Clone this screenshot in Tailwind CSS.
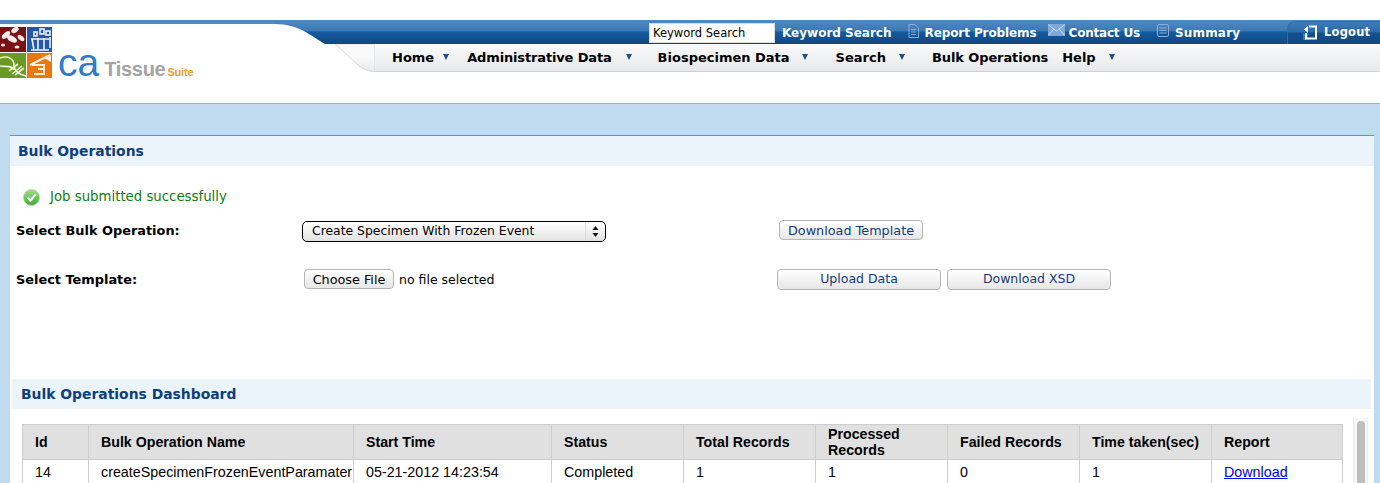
<!DOCTYPE html>
<html lang="en">

<head>
    <meta charset="UTF-8">
    <title>caTissue Suite - Bulk Operations</title>
    <script src="https://cdn.jsdelivr.net/npm/@tailwindcss/browser@4"></script>
</head>

<body class="h-[483px] overflow-hidden bg-[#c0daf0] font-['DejaVu_Sans',sans-serif]">
    <!-- header -->
    <header class="flex h-[104px] border-b border-[#8db5de] bg-white pt-[20px]">
        <div class="w-[275px] shrink-0">
            <div class="h-[4px] bg-[#5089c0]"></div>
            <div class="flex items-end pt-[3px]">
                <svg class="h-[51px] w-[52px] shrink-0 blur-[0.4px]" viewBox="0 0 52 51">
                    <rect x="0" y="0" width="26" height="25" fill="#7c0f14" />
                    <g fill="#f7ecea">
                        <ellipse cx="6" cy="8" rx="5" ry="2.500" transform="rotate(-40 6 8)" />
                        <ellipse cx="15" cy="3" rx="4" ry="2.500" transform="rotate(-30 15 3)" />
                        <ellipse cx="12" cy="12" rx="5.500" ry="3" transform="rotate(30 12 12)" />
                        <ellipse cx="21" cy="11" rx="4" ry="2.200" transform="rotate(40 21 11)" />
                        <ellipse cx="3" cy="18" rx="2" ry="1.500" />
                        <ellipse cx="17" cy="20" rx="2.500" ry="1.500" />
                    </g>
                    <rect x="27" y="0" width="25" height="25" fill="#2458a8" />
                    <g fill="none" stroke="#eef2fa" stroke-width="1.600">
                        <path d="M32 12l2 11M38 11v12M44 11v12M50 10v11" />
                        <path d="M31 12h20M31 23h18" />
                        <rect x="40" y="2" width="4" height="5" />
                        <rect x="46" y="4" width="4" height="4" />
                        <rect x="34" y="5" width="3" height="4" />
                    </g>
                    <rect x="0" y="26" width="26" height="25" fill="#6b9a22" />
                    <g fill="none" stroke="#eef3dc" stroke-width="1.600">
                        <path d="M0 31c8-3 14 1 14 7s6 10 12 11" />
                        <path d="M0 39c6 1 12-1 14 4" />
                        <path d="M12 47l10-8M9 44l9-7M15 48l9-7" />
                    </g>
                    <rect x="27" y="26" width="25" height="25" fill="#e9790f" />
                    <g fill="none" stroke="#fbeee0" stroke-width="2">
                        <path d="M30 38l12-6 8-4" />
                        <path d="M32 38h12v9h-10M38 42h6" />
                    </g>
                    <path d="M44 31l7-3v7z" fill="#fbeee0" />
                </svg>
                <div class="mb-[-4px] ml-[6px] flex items-baseline leading-none">
                    <span class="font-['Liberation_Sans',sans-serif] text-[39px] text-[#2f7bcb]">ca</span>
                    <span class="ml-[5px] font-['Liberation_Sans',sans-serif] text-[20px] font-bold tracking-[-0.3px] text-[#a3a3a3]">Tissue</span>
                    <span class="ml-[2px] font-['Liberation_Sans',sans-serif] text-[11px] font-bold tracking-[-0.2px] text-[#e2a12f]">Suite</span>
                </div>
            </div>
        </div>

        <svg class="h-[52px] w-[100px] shrink-0" viewBox="0 0 100 52">
            <defs>
                <linearGradient id="barFill" x1="0" y1="0" x2="0" y2="1">
                    <stop offset="0" stop-color="#5089c0" />
                    <stop offset="0.45" stop-color="#3b79b6" />
                    <stop offset="0.5" stop-color="#145a9f" />
                    <stop offset="1" stop-color="#12477f" />
                </linearGradient>
                <linearGradient id="navFill" x1="0" y1="0" x2="0" y2="1">
                    <stop offset="0.46" stop-color="#fafafa" />
                    <stop offset="1" stop-color="#e7e8ea" />
                </linearGradient>
            </defs>
            <path d="M60 24H100V51.500H97C84 50 76 37 60 24Z" fill="url(#navFill)" stroke="#d4d4d4" stroke-width="0.8" />
            <path d="M0 0H100V24H50C36 16 24 4 0 4Z" fill="url(#barFill)" />
        </svg>

        <div class="min-w-0 flex-1">
            <div class="flex h-[24px] bg-[linear-gradient(#5089c0_0%,#3b79b6_45%,#145a9f_50%,#12477f_100%)] text-[12px] font-bold text-white">
                <input value="Keyword Search" class="ml-[274px] mt-[3px] h-[20px] w-[126px] border border-[#dcdcdc] bg-white pl-[3px] text-[11.500px] font-normal text-black">
                <a class="ml-[7px] mt-[4px]">Keyword Search</a>
                <svg class="ml-[16px] mt-[4px] h-[14px] w-[11px]" viewBox="0 0 11 14" fill="none" stroke="#88aedb">
                    <path d="M1 .5H7L10.500 4V13.500H1Z" />
                    <path d="M3 5.500H8M3 8H8M3 10.500H8" />
                </svg>
                <a class="ml-[6px] mt-[4px] tracking-[-0.1px]">Report Problems</a>
                <svg class="ml-[11px] mt-[4px] h-[12px] w-[17px]" viewBox="0 0 17 12">
                    <rect width="17" height="12" fill="#7ea8da" />
                    <path d="M0 .5L8.500 7L17 .5M0 11.500L6 5M17 11.500L11 5" fill="none" stroke="#c6daf2" />
                </svg>
                <a class="ml-[4px] mt-[4px] tracking-[-0.2px]">Contact Us</a>
                <svg class="ml-[17px] mt-[4px] h-[13px] w-[12px]" viewBox="0 0 12 13" fill="none" stroke="#88aedb">
                    <rect x=".5" y=".5" width="11" height="12" rx="1.500" />
                    <path d="M2.500 4H9.500M2.500 6.500H9.500M2.500 9H9.500" />
                </svg>
                <a class="ml-[6px] mt-[4px] tracking-[0.2px]">Summary</a>
                <div class="ml-auto mt-[1px] flex h-[23px] w-[93px] rounded-tl-[8px] border-l border-t border-[#2f6dae] bg-[linear-gradient(#3e7ab7_0%,#2b6bab_45%,#13528f_50%,#11467e_100%)] pl-[15px]">
                    <svg class="mt-[3px] h-[15px] w-[15px]" viewBox="0 0 15 15">
                        <path d="M0 8h5v7H0z" fill="#2f7bdb" />
                        <path d="M6 1.500H13V13.500H3V8" fill="none" stroke="#fff" stroke-width="2" />
                        <path d="M1 4.500L5 1V8Z" fill="#fff" />
                    </svg>
                    <a class="ml-[6px] mt-[2px] text-[11.500px] tracking-[0.2px]">Logout</a>
                </div>
            </div>

            <nav class="flex h-[28px] items-center border-b-[1.500px] border-[#d0d0d0] bg-[linear-gradient(#fafafa,#e8e9eb)] pl-[17px] text-[13px] font-bold text-black">
                <a>Home</a>
                <span class="ml-[9px] mt-[-2px] border-x-[3.500px] border-t-[6px] border-x-transparent border-t-[#1d4f8c]"></span>
                <a class="ml-[18px] tracking-[-0.15px]">Administrative Data</a>
                <span class="ml-[14px] mt-[-2px] border-x-[3.500px] border-t-[6px] border-x-transparent border-t-[#1d4f8c]"></span>
                <a class="ml-[26px]">Biospecimen Data</a>
                <span class="ml-[12px] mt-[-2px] border-x-[3.500px] border-t-[6px] border-x-transparent border-t-[#1d4f8c]"></span>
                <a class="ml-[28px]">Search</a>
                <span class="ml-[13px] mt-[-2px] border-x-[3.500px] border-t-[6px] border-x-transparent border-t-[#1d4f8c]"></span>
                <a class="ml-[27px] tracking-[-0.1px]">Bulk Operations</a>
                <a class="ml-[14px]">Help</a>
                <span class="ml-[13px] mt-[-2px] border-x-[3.500px] border-t-[6px] border-x-transparent border-t-[#1d4f8c]"></span>
            </nav>
        </div>
    </header>

    <!-- main panel -->
    <main class="ml-[10px] mr-[6px] mt-[31px] border-t border-[#cf7440] bg-white">
        <h2 class="flex h-[30px] items-center bg-[#ebf3fb] pl-[8px] text-[13.900px] font-bold text-[#0f3e7d]">Bulk Operations</h2>

        <div class="flex h-[44px] items-center pb-[2px] pl-[13px] pt-[20px] text-[13.300px] text-[#0f7d0f]">
            <svg class="h-[17px] w-[17px]" viewBox="0 0 17 17">
                <defs>
                    <linearGradient id="okFill" x1="0" y1="0" x2="0" y2="1">
                        <stop offset="0" stop-color="#a5e08a" />
                        <stop offset="1" stop-color="#35ad2a" />
                    </linearGradient>
                </defs>
                <circle cx="8.500" cy="8.500" r="8" fill="url(#okFill)" stroke="#c4c9c4" />
                <path d="M4.500 8.500L7.500 11.500L12.500 5.500" fill="none" stroke="#fff" stroke-width="2" />
            </svg>
            <span class="ml-[10px]">Job submitted successfully</span>
        </div>

        <div class="grid grid-cols-[286px_475px_1fr] pl-[6px] text-[12.900px] text-black">
            <label class="flex h-[49px] items-center pb-[7px] font-bold">Select Bulk Operation:</label>
            <div class="flex h-[49px] items-center pb-[7px]">
                <div class="relative h-[21px] w-[304px]">
                    <select class="h-full w-full appearance-none rounded-[5px] border border-black bg-[linear-gradient(#ffffff,#e2e2e2)] pl-[9px] text-[12.400px]">
                        <option>Create Specimen With Frozen Event</option>
                    </select>
                    <span class="absolute bottom-[1px] right-[1px] top-[1px] flex w-[20px] items-center justify-center border-l border-[#dddddd]">
                        <svg class="h-[11px] w-[7px]" viewBox="0 0 7 11" fill="#111">
                            <path d="M3.500 0L6.500 4H.5ZM3.500 11L.5 7H6.500Z" />
                        </svg>
                    </span>
                </div>
            </div>
            <div class="flex h-[49px] items-center pb-[9px]">
                <button class="ml-[2px] h-[20px] w-[144px] rounded-[4px] border border-[#b5b5b5] bg-[linear-gradient(#ffffff,#e6e6e6)] text-[12.800px] text-[#173a7a]">Download Template</button>
            </div>

            <label class="flex h-[49px] items-center pb-[7px] font-bold">Select Template:</label>
            <div class="flex h-[49px] items-center pb-[7px] text-[12.500px]">
                <button class="ml-[2px] mt-[-2px] h-[20px] w-[90px] rounded-[4px] border border-[#b5b5b5] bg-[linear-gradient(#ffffff,#e6e6e6)] text-[12.800px]">Choose File</button>
                <span class="ml-[5px]">no file selected</span>
            </div>
            <div class="flex h-[49px] items-center gap-[6px] pb-[9px] text-[12.500px] text-[#173a7a]">
                <button class="h-[21px] w-[164px] rounded-[4px] border border-[#b5b5b5] bg-[linear-gradient(#ffffff,#e6e6e6)]">Upload Data</button>
                <button class="h-[21px] w-[164px] rounded-[4px] border border-[#b5b5b5] bg-[linear-gradient(#ffffff,#e6e6e6)]">Download XSD</button>
            </div>
        </div>

        <h2 class="ml-[2px] mr-[3px] mt-[71px] flex h-[30px] items-center bg-[#ebf3fb] pl-[9px] text-[13.900px] font-bold text-[#0f3e7d]">Bulk Operations Dashboard</h2>

        <div class="mt-[9px] flex">
            <div class="ml-[12px] mt-[6px] w-[1320px] shrink-0">
                <table class="w-[1320px] table-fixed border-collapse font-['Liberation_Sans',sans-serif] text-[14.300px] text-black">
                    <colgroup>
                        <col class="w-[66px]">
                        <col class="w-[265px]">
                        <col class="w-[198px]">
                        <col class="w-[132px]">
                        <col class="w-[132px]">
                        <col class="w-[132px]">
                        <col class="w-[132px]">
                        <col class="w-[132px]">
                        <col class="w-[131px]">
                    </colgroup>
                    <thead>
                        <tr class="h-[35px] bg-[#e0e0e0] text-left text-[14.200px] font-bold leading-[16px]">
                            <th class="border border-[#cdcdcd] pl-[12px]">Id</th>
                            <th class="border border-[#cdcdcd] pl-[12px]">Bulk Operation Name</th>
                            <th class="border border-[#cdcdcd] pl-[12px]">Start Time</th>
                            <th class="border border-[#cdcdcd] pl-[12px]">Status</th>
                            <th class="border border-[#cdcdcd] pl-[12px]">Total Records</th>
                            <th class="border border-[#cdcdcd] pl-[12px]">Processed Records</th>
                            <th class="border border-[#cdcdcd] pl-[12px]">Failed Records</th>
                            <th class="border border-[#cdcdcd] pl-[12px]">Time taken(sec)</th>
                            <th class="border border-[#cdcdcd] pl-[12px]">Report</th>
                        </tr>
                    </thead>
                    <tbody>
                        <tr class="h-[26px]">
                            <td class="border border-[#cdcdcd] pl-[12px]">14</td>
                            <td class="overflow-hidden whitespace-nowrap border border-[#cdcdcd] pl-[12px]">createSpecimenFrozenEventParamater</td>
                            <td class="border border-[#cdcdcd] pl-[12px]">05-21-2012 14:23:54</td>
                            <td class="border border-[#cdcdcd] pl-[12px]">Completed</td>
                            <td class="border border-[#cdcdcd] pl-[12px]">1</td>
                            <td class="border border-[#cdcdcd] pl-[12px]">1</td>
                            <td class="border border-[#cdcdcd] pl-[12px]">0</td>
                            <td class="border border-[#cdcdcd] pl-[12px]">1</td>
                            <td class="border border-[#cdcdcd] pl-[12px]"><a href="#" class="text-[#0000ee] underline">Download</a></td>
                        </tr>
                    </tbody>
                </table>
            </div>
            <!-- scrollbar -->
            <div class="ml-[11px] h-[80px] w-[15px] border-x border-[#ececec] bg-[#f7f7f7] pl-[3px] pt-[3px]">
                <div class="h-full w-[8px] rounded-t-full bg-[#bdbdbd]"></div>
            </div>
        </div>
    </main>
</body>

</html>
